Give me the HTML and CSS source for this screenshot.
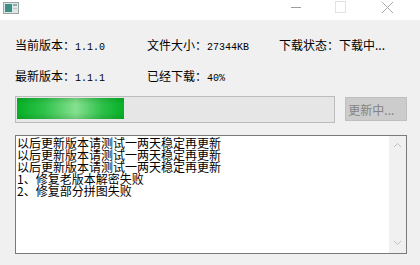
FILE: index.html
```html
<!DOCTYPE html>
<html lang="zh-CN">

<head>
    <meta charset="UTF-8">
    <title>更新</title>
    <link rel="stylesheet" href="styles.css">
</head>

<body>

    <div class="titlebar">
        <svg class="app-icon" width="16" height="12" viewBox="0 0 16 12">
            <rect x="0.5" y="0.5" width="15" height="11" fill="#dfe6e6" stroke="#9aa6a6"/>
            <rect x="2" y="2" width="7" height="8" fill="#3f8f86"/>
            <rect x="10" y="2" width="4" height="2" fill="#8fb0ad"/>
            <rect x="10" y="6" width="4" height="1" fill="#b8c6c5"/>
        </svg>
        <div class="controls">
            <svg width="46" height="20" viewBox="0 0 46 20">
                <line x1="13" y1="7.5" x2="23" y2="7.5" stroke="#9c9c9c"/>
            </svg>
            <svg width="46" height="20" viewBox="0 0 46 20">
                <rect x="11.5" y="1.5" width="10" height="11" fill="none" stroke="#e2e2e2"/>
            </svg>
            <svg width="46" height="20" viewBox="0 0 46 20">
                <path d="M12 2 L23 13 M23 2 L12 13" stroke="#a8a8a8" fill="none"/>
            </svg>
        </div>
    </div>

    <div class="content">
        <div class="info">
            <div class="item"><span class="label">当前版本：</span><span class="mono">1.1.0</span></div>
            <div class="item"><span class="label">文件大小：</span><span class="mono">27344KB</span></div>
            <div class="item"><span class="label">下载状态：下载中...</span></div>
            <div class="item"><span class="label">最新版本：</span><span class="mono">1.1.1</span></div>
            <div class="item"><span class="label">已经下载：</span><span class="mono">40%</span></div>
        </div>

        <div class="progress-row">
            <div class="progress">
                <div class="fill" style="width: 107px;"></div>
            </div>
            <button class="update-btn" disabled>更新中...</button>
        </div>

        <div class="log">
            <div class="log-text">以后更新版本请测试一两天稳定再更新<br>以后更新版本请测试一两天稳定再更新<br>以后更新版本请测试一两天稳定再更新<br>1、修复老版本解密失败<br>2、修复部分拼图失败</div>
            <div class="scrollbar">
                <svg width="17" height="17" viewBox="0 0 17 17">
                    <path d="M5 10 L8.5 6.5 L12 10" stroke="#c0c0c0" fill="none"/>
                </svg>
                <svg width="17" height="17" viewBox="0 0 17 17">
                    <path d="M5 6 L8.5 9.5 L12 6" stroke="#c0c0c0" fill="none"/>
                </svg>
            </div>
        </div>
    </div>

</body>

</html>
```

FILE: styles.css
```css
body {
    margin: 0;
    width: 420px;
    height: 265px;
    overflow: hidden;
    background: #f0f0f0;
    font-family: "Noto Sans CJK SC", sans-serif;
    font-size: 12px;
    color: #000;
}

.titlebar {
    height: 20px;
    background: #fff;
    display: flex;
    justify-content: space-between;
    align-items: flex-start;
}

.app-icon {
    margin: 2px 0 0 3px;
}

.controls {
    display: flex;
    margin-right: 4px;
}

.content {
    padding: 18px 13px 0 15px;
}

.info {
    display: grid;
    grid-template-columns: 132px 132px auto;
    row-gap: 17px;
}

.item {
    height: 14px;
    line-height: 14px;
    white-space: nowrap;
}

.label {
    font-size: 12px;
}

.mono {
    font-family: "Liberation Mono", monospace;
    font-size: 10px;
}

.progress-row {
    display: flex;
    gap: 10px;
    margin-top: 13px;
}

.progress {
    width: 318px;
    height: 23px;
    border: 1px solid #bcbcbc;
    background: #e6e6e6;
    padding: 1px;
    box-sizing: content-box;
    position: relative;
}

.progress .fill {
    height: 21px;
    background:
        linear-gradient(to bottom, rgba(0, 90, 10, 0.18), rgba(255, 255, 255, 0) 30%, rgba(255, 255, 255, 0) 70%, rgba(0, 90, 10, 0.18)),
        linear-gradient(to right, #06b025 0%, #2ec24a 25%, #86e090 55%, #2cc048 80%, #06b025 100%);
}

.update-btn {
    width: 62px;
    height: 24px;
    margin-top: 1px;
    padding: 0 0 0 2px;
    border: 1px solid #bfbfbf;
    background: #cccccc;
    color: #838383;
    font-family: "Noto Sans CJK SC", sans-serif;
    font-size: 12px;
    text-align: left;
}

.log {
    display: flex;
    width: 390px;
    height: 117px;
    margin-top: 12px;
    border: 1px solid #7a7a7a;
    background: #fff;
}

.log-text {
    flex: 1;
    padding: 1px 0 0 1px;
    font-size: 12px;
    line-height: 12px;
    white-space: nowrap;
}

.scrollbar {
    width: 17px;
    background: #f0f0f0;
    display: flex;
    flex-direction: column;
    justify-content: space-between;
    padding: 1px 0;
}
```
